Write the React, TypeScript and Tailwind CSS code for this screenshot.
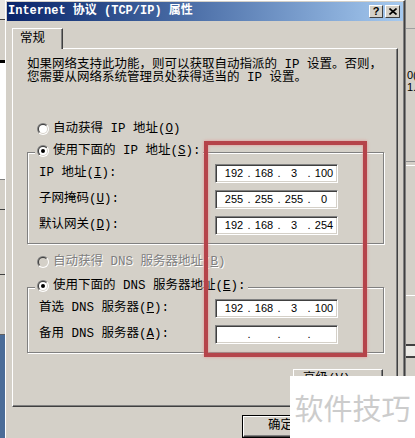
import type { ReactNode } from "react";

const cjk = "font-['Liberation_Mono','Noto_Sans_CJK_SC',monospace]";

function Radio({ checked, disabled }: { checked?: boolean; disabled?: boolean }) {
  return (
    <svg width="12" height="12" viewBox="0 0 12 12" className="shrink-0">
      <defs>
        <linearGradient id="radio-outer" x1="0" y1="0" x2="1" y2="1">
          <stop offset="0.5" stopColor="#808080" />
          <stop offset="0.5" stopColor="#ffffff" />
        </linearGradient>
        <linearGradient id="radio-inner" x1="0" y1="0" x2="1" y2="1">
          <stop offset="0.5" stopColor="#404040" />
          <stop offset="0.5" stopColor="#d4d0c8" />
        </linearGradient>
      </defs>
      <circle cx="6" cy="6" r="6" fill="url(#radio-outer)" />
      <circle cx="6" cy="6" r="5" fill="url(#radio-inner)" />
      <circle cx="6" cy="6" r="4" fill={disabled ? "#d4d0c8" : "#ffffff"} />
      {checked && <circle cx="6" cy="6" r="2" fill="#000000" />}
    </svg>
  );
}

function IpField({ parts }: { parts: string[] }) {
  return (
    <div className="w-[123px] h-[19px] shrink-0 bg-white border border-t-[#808080] border-l-[#808080] border-b-white border-r-white shadow-[inset_1px_1px_0_#404040,inset_-1px_-1px_0_#d4d0c8] flex items-center font-['Liberation_Sans',Arial,sans-serif] text-[11px] text-black">
      {parts.map((p, i) => (
        <div key={i} className="flex w-[30px] shrink-0">
          <span className="w-[6px] text-center">{i > 0 ? "." : ""}</span>
          <span className="w-[24px] text-center">{p}</span>
        </div>
      ))}
    </div>
  );
}

function Row({ label, parts }: { label: ReactNode; parts: string[] }) {
  return (
    <div className="flex items-center h-[19px]">
      <span className="w-[176px] shrink-0">{label}</span>
      <IpField parts={parts} />
    </div>
  );
}

function Group({ legend, children }: { legend: ReactNode; children: ReactNode }) {
  return (
    <div className="w-[357px] border border-[#808080] shadow-[inset_1px_1px_0_#fff,1px_1px_0_#fff] pl-[11px] pb-[8px]">
      <div className="-mt-[10px] -ml-[4px] w-fit bg-[#d4d0c8] px-[2px] h-[16px] flex items-center gap-[4px]">
        <Radio checked />
        <span>{legend}</span>
      </div>
      <div className="mt-[5px] flex flex-col gap-[7px]">{children}</div>
    </div>
  );
}

function Button({ children, primary }: { children?: ReactNode; primary?: boolean }) {
  return (
    <div className={primary ? "border border-black" : ""}>
      <div className="w-[75px] h-[21px] border border-t-white border-l-white border-r-[#404040] border-b-[#404040] shadow-[inset_-1px_-1px_0_#808080] flex items-center justify-center">
        {children}
      </div>
    </div>
  );
}

export default function App() {
  return (
    <div className={`relative w-[415px] h-[438px] overflow-hidden flex bg-[#d4d0c8] text-black ${cjk} text-[12.5px] leading-[13px]`}>
      {/* window behind, left edge */}
      <div className="w-[5px] shrink-0 flex flex-col">
        <div className="h-[20px] bg-[#e8e6e0] border-b border-[#404040]" />
        <div className="h-[40px] bg-[#d4d0c8]" />
        <div className="h-[3px] bg-black" />
        <div className="h-[117px] bg-white border-b border-[#808080]" />
        <div className="h-[30px] bg-[#d4d0c8] border-b border-[#404040]" />
        <div className="h-[65px] bg-[#d4d0c8] border-b border-[#404040]" />
        <div className="h-[60px] bg-[#d4d0c8] border-b border-[#606060]" />
        <div className="flex-1 bg-[#4a6c98]" />
      </div>

      {/* dialog */}
      <div className="w-[400px] shrink-0 flex flex-col border-l border-t border-white border-r border-r-[#404040] shadow-[inset_-1px_0_0_#808080] pt-[1px]">
        <div className="ml-[1px] mr-[1px] h-[19px] bg-gradient-to-r from-[#0a246a] to-[#a6caf0] flex items-center pl-[1px] pr-[3px]">
          <span className="font-bold text-white text-[12px]">Internet 协议 (TCP/IP) 属性</span>
          <div className="ml-auto flex gap-[2px]">
            <div className="w-[14px] h-[13px] bg-[#d4d0c8] border border-t-white border-l-white border-r-[#404040] border-b-[#404040] flex items-center justify-center font-['Liberation_Sans',Arial,sans-serif] font-bold text-[11px] leading-none">?</div>
            <div className="w-[15px] h-[13px] bg-[#d4d0c8] border border-t-white border-l-white border-r-[#404040] border-b-[#404040] flex items-center justify-center">
              <svg width="8" height="7" viewBox="0 0 8 7">
                <path d="M0.5 0.5 L7.5 6.5 M7.5 0.5 L0.5 6.5" stroke="#000" strokeWidth="1.6" />
              </svg>
            </div>
          </div>
        </div>

        {/* tab */}
        <div className="mt-[7px] ml-[6px] relative z-10 -mb-[1px] w-[51px] h-[21px] bg-[#d4d0c8] border-t border-l border-white border-r border-r-[#404040] shadow-[inset_-1px_0_0_#808080] flex items-center pl-[7px]">
          常规
        </div>

        {/* panel */}
        <div className="ml-[6px] w-[386px] h-[359px] shrink-0 border border-t-white border-l-white border-r-[#404040] border-b-[#404040] shadow-[inset_-1px_-1px_0_#808080] pl-[14px] pt-[10px] flex flex-col">
          <p>如果网络支持此功能，则可以获取自动指派的 IP 设置。否则，</p>
          <p>您需要从网络系统管理员处获得适当的 IP 设置。</p>

          <div className="mt-[36px] h-[16px] flex items-center gap-[4px] pl-[10px]">
            <Radio />
            <span>自动获得 IP 地址(<u>O</u>)</span>
          </div>

          <div className="mt-[15px]">
            <Group legend={<>使用下面的 IP 地址(<u>S</u>):</>}>
              <Row label={<>IP 地址(<u>I</u>):</>} parts={["192", "168", "3", "100"]} />
              <Row label={<>子网掩码(<u>U</u>):</>} parts={["255", "255", "255", "0"]} />
              <Row label={<>默认网关(<u>D</u>):</>} parts={["192", "168", "3", "254"]} />
            </Group>
          </div>

          <div className="mt-[10px] h-[16px] flex items-center gap-[4px] pl-[10px] text-[#808080] [text-shadow:1px_1px_0_#fff]">
            <Radio disabled />
            <span>自动获得 DNS 服务器地址(<u>B</u>)</span>
          </div>

          <div className="mt-[17px]">
            <Group legend={<>使用下面的 DNS 服务器地址(<u>E</u>):</>}>
              <Row label={<>首选 DNS 服务器(<u>P</u>):</>} parts={["192", "168", "3", "100"]} />
              <Row label={<>备用 DNS 服务器(<u>A</u>):</>} parts={["", "", "", ""]} />
            </Group>
          </div>

          <div className="mt-[16px] ml-[266px] w-[90px] h-[21px] border border-t-white border-l-white border-r-[#404040] border-b-[#404040] shadow-[inset_-1px_-1px_0_#808080] flex items-center justify-center">
            高级(<u>V</u>)...
          </div>
        </div>

        <div className="mt-[8px] ml-[236px] flex gap-[6px]">
          <Button primary>确定</Button>
          <Button />
        </div>
      </div>

      {/* window behind, right edge */}
      <div className="w-[10px] shrink-0 flex flex-col bg-[#d4d0c8] border-l border-[#808080] overflow-hidden font-['Liberation_Sans',Arial,sans-serif] text-[11px] leading-[12px]">
        <div className="h-[29px] border-b border-[#a0a0a0]" />
        <div className="h-[40px]" />
        <div className="pl-[1px]">0(</div>
        <div className="pl-[1px]">1.</div>
        <div className="h-[69px] border-b border-[#909090]" />
        <div className="h-[4px] border-b border-white" />
        <div className="h-[130px] border-b border-white" />
        <div className="h-[50px] border-b-2 border-[#404040]" />
        <div className="h-[12px] bg-[#ecebe6] border-b-2 border-[#404040]" />
        <div className="flex-1" />
      </div>

      {/* red highlight */}
      <div className="absolute left-[204px] top-[141px] w-[163px] h-[216px] border-4 border-[#b5434a] shadow-[0_0_3px_#e89090,inset_0_0_3px_#e89090]" />

      {/* watermark */}
      <div className="absolute left-[290px] top-[376px] w-[125px] h-[62px] bg-white flex items-center justify-center font-['Noto_Sans_CJK_SC',sans-serif] text-[29px] leading-none text-[#cccccc]">
        软件技巧
      </div>
    </div>
  );
}
